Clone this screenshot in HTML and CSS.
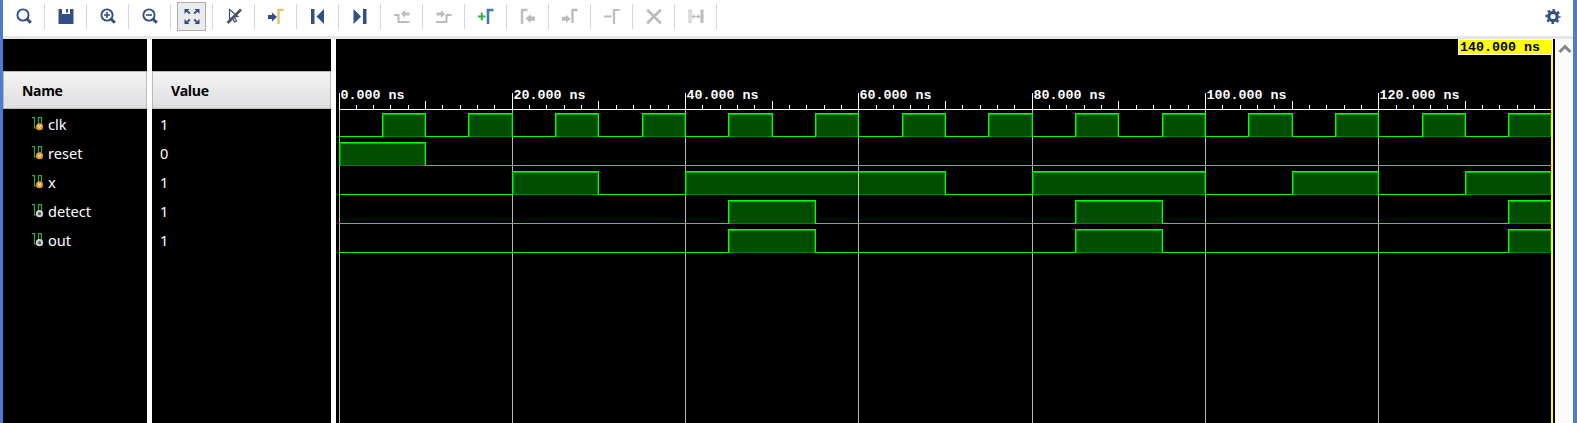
FILE: index.html
```html
<!DOCTYPE html>
<html lang="en">
<head>
<meta charset="utf-8">
<title>Waveform</title>
<link rel="stylesheet" href="styles.css">
</head>
<body>
<svg class="defs" width="0" height="0">
  <defs>
    <symbol id="lens" viewBox="0 0 16 16"><circle cx="7" cy="7" r="5.6" fill="none" stroke="currentColor" stroke-width="1.9"/><path d="M11 11l3.800 3.800" stroke="currentColor" stroke-width="3"/></symbol>
    <symbol id="sig" viewBox="0 0 12 14"><path d="M0 .6H2.500V11H5M6.500 8V.6H9.500V8" fill="none" stroke="#35a548" stroke-width="1.200"/></symbol>
  </defs>
</svg>
<div class="window">
  <div class="toolbar">
    <div class="tool"><svg viewBox="0 0 16 16"><use href="#lens"/></svg></div>
    <div class="tool"><svg viewBox="0 0 16 16"><path fill="currentColor" d="M.5 1H4v5h8V1h3.500v15H.5zM8 1h2v3.500H8z"/></svg></div>
    <div class="tool"><svg viewBox="0 0 16 16"><use href="#lens"/><path d="M4 7h6M7 4v6" stroke="currentColor" stroke-width="1.600"/></svg></div>
    <div class="tool"><svg viewBox="0 0 16 16"><use href="#lens"/><path d="M4 7h6" stroke="currentColor" stroke-width="1.600"/></svg></div>
    <div class="tool pressed"><svg viewBox="0 0 16 16"><path fill="currentColor" d="M.5 1h5L4 2.500l2.500 2.300-1.400 1.400L2.600 3.800.5 6zM15.500 1v5l-2.100-2.200L10.900 6.200 9.500 4.800 12 2.500 10.500 1zM.5 16v-5l2.100 2.200 2.500-2.400 1.400 1.400L4 14.500 5.500 16zM15.500 16h-5L12 14.500l-2.500-2.300 1.400-1.400 2.500 2.400 2.100-2.200z"/></svg></div>
    <div class="tool"><svg viewBox="0 0 16 16"><path d="M3.500 1.500v10.500l2.700-2.300 2.300 4.300 2-1-2.200-4 3.700-.4z" fill="none" stroke="currentColor" stroke-width="1.200"/><path d="M1.500 15L15 1.500" stroke="#555" stroke-width="2.600"/></svg></div>
    <div class="tool"><svg viewBox="0 0 16 16"><path fill="currentColor" d="M0 7h4V4.500L9 9l-5 4.500V11H0z"/><path d="M10.500 16V2H15.500" fill="none" stroke="#e5c563" stroke-width="2.400"/></svg></div>
    <div class="tool"><svg viewBox="0 0 16 16"><path fill="currentColor" d="M1 1h3.500v15H1zM14 1v15L6.500 8.500z"/></svg></div>
    <div class="tool"><svg viewBox="0 0 16 16"><path fill="currentColor" d="M11 1h3.500v15H11zM1.500 1v15L9 8.500z"/></svg></div>
    <div class="tool off"><svg viewBox="0 0 16 16"><path d="M0 7H4.500V14H15.500" fill="none" stroke="currentColor" stroke-width="2"/><path fill="currentColor" d="M7 6l4-4v2.500h4.500v3H11V10z"/></svg></div>
    <div class="tool off"><svg viewBox="0 0 16 16"><path d="M0 14H10.500V7H15.500" fill="none" stroke="currentColor" stroke-width="2"/><path fill="currentColor" d="M9 6L5 2v2.500H.5v3H5V10z"/></svg></div>
    <div class="tool"><svg viewBox="0 0 16 16"><path d="M0 8.500h7.500M3.800 4.700v7.600" stroke="#3cb043" stroke-width="2.200"/><path d="M10 16V2H15.500" fill="none" stroke="#3a7cb0" stroke-width="2.600"/></svg></div>
    <div class="tool off"><svg viewBox="0 0 16 16"><path d="M2 16V2H7.500" fill="none" stroke="currentColor" stroke-width="2.400"/><path fill="currentColor" d="M5.500 10.500L10.500 6v2.500H15v4.200h-4.500V15z"/></svg></div>
    <div class="tool off"><svg viewBox="0 0 16 16"><path fill="currentColor" d="M0 8.700h4V6.500L8.700 11 4 15v-2.200H0z"/><path d="M10.500 15V2H15.500" fill="none" stroke="currentColor" stroke-width="2.400"/></svg></div>
    <div class="tool off"><svg viewBox="0 0 16 16"><path d="M0 8.500h7.500M10 16V2H15.500" fill="none" stroke="currentColor" stroke-width="2.200"/></svg></div>
    <div class="tool off"><svg viewBox="0 0 16 16"><path d="M1.200 1.700l13.600 13.600M14.800 1.700l-13.600 13.600" stroke="currentColor" stroke-width="2.800"/></svg></div>
    <div class="tool off"><svg viewBox="0 0 16 16"><path d="M1 2h2v12.500H1z" fill="none" stroke="currentColor"/><path fill="currentColor" d="M12.500 1.500h3V15h-3zM3.500 8.500L6.500 6v2h3V6l3 2.500-3 2.500V9h-3v2z"/></svg></div>
    <div class="tool settings"><svg viewBox="0 0 16 16"><circle cx="8" cy="8.500" r="4.200" fill="none" stroke="currentColor" stroke-width="3.200"/><circle cx="8" cy="8.500" r="6.500" fill="none" stroke="currentColor" stroke-width="2.200" stroke-dasharray="2.553 2.553" stroke-dashoffset="1.276"/></svg></div>
  </div>
  <div class="main">
    <div class="column names">
      <div class="head">Name</div>
      <div class="row"><svg class="sig" viewBox="0 0 12 14"><use href="#sig"/><circle cx="7.500" cy="9.700" r="3.500" fill="#f39a2b"/><path d="M6.300 8.300l1.200 2.500 1.200-2.500" fill="none" stroke="#fff"/></svg>clk</div>
      <div class="row"><svg class="sig" viewBox="0 0 12 14"><use href="#sig"/><circle cx="7.500" cy="9.700" r="3.500" fill="#f39a2b"/><path d="M6.300 8.300l1.200 2.500 1.200-2.500" fill="none" stroke="#fff"/></svg>reset</div>
      <div class="row"><svg class="sig" viewBox="0 0 12 14"><use href="#sig"/><circle cx="7.500" cy="9.700" r="3.500" fill="#f39a2b"/><path d="M6.300 8.300l1.200 2.500 1.200-2.500" fill="none" stroke="#fff"/></svg>x</div>
      <div class="row"><svg class="sig" viewBox="0 0 12 14"><use href="#sig"/><circle cx="7.500" cy="9.700" r="2.600" fill="#555" stroke="#d0d0d0" stroke-width="2"/></svg>detect</div>
      <div class="row"><svg class="sig" viewBox="0 0 12 14"><use href="#sig"/><circle cx="7.500" cy="9.700" r="2.600" fill="#555" stroke="#d0d0d0" stroke-width="2"/></svg>out</div>
    </div>
    <div class="column values">
      <div class="head">Value</div>
      <div class="row">1</div>
      <div class="row">0</div>
      <div class="row">1</div>
      <div class="row">1</div>
      <div class="row">1</div>
    </div>
    <svg class="wave" id="wave" width="1219" height="384" viewBox="336 39 1219 384"></svg>
    <div class="scroll"><svg width="14" height="10" viewBox="0 0 14 10"><path d="M1.500 8L7 2.500 12.500 8" fill="none" stroke="#858585" stroke-width="3"/></svg></div>
  </div>
</div>
<script src="wave.js"></script>
</body>
</html>
```
FILE: styles.css
```css
body { margin: 0; background: #fff; }
.defs { position: absolute; }
.window {
  box-sizing: border-box;
  width: 1577px;
  height: 423px;
  overflow: hidden;
  border-left: 3px solid #4a7dcf;
  border-right: 4px solid #4a7dcf;
  font-family: "Noto Sans", "Open Sans", sans-serif;
}
.toolbar {
  box-sizing: border-box;
  display: flex;
  height: 39px;
  padding-top: 4px;
  border-bottom: 3px solid #e6e6e6;
  color: #324f85;
}
.tool {
  position: relative;
  display: flex;
  width: 42px;
  height: 25px;
  box-sizing: border-box;
  padding: 4px 0 0 12.5px;
  border-right: 1px solid #d6d6d6;
}
.tool svg { width: 16px; height: 16px; display: block; }
.off { color: #bcbcbc; }
.pressed::before {
  content: "";
  position: absolute;
  left: 6px;
  top: -2px;
  width: 27px;
  height: 27px;
  border: 1px solid #adadad;
  background: #ebebeb;
}
.pressed svg { position: relative; }
.settings { margin-left: auto; width: 29px; padding-left: 0.5px; border: 0; }
.main { display: flex; height: 384px; }
.column {
  box-sizing: border-box;
  background: #000;
  color: #fff;
  padding-top: 32px;
  margin-right: 5px;
  font-size: 14.6px;
}
.names { width: 144px; }
.values { width: 179px; }
.head {
  box-sizing: border-box;
  height: 38px;
  padding-left: 18px;
  border: 1px solid #b9b9bb;
  background: linear-gradient(#f4f4f4, #dedee1);
  color: #000;
  font: 700 14px/37px "Open Sans", "Noto Sans", sans-serif;
  letter-spacing: -0.35px;
}
.row {
  box-sizing: border-box;
  display: flex;
  align-items: center;
  height: 29px;
  padding: 1px 0 0 8px;
  line-height: 29px;
}
.names .row { padding-left: 29px; }
.sig { width: 12px; height: 14px; margin-right: 4px; }
.wave { display: block; background: #000; flex: none; }
.wave text { font: bold 13.333px "Liberation Mono", monospace; fill: #fff; }
.wave .marker { fill: #000; }
.scroll { flex: 1; background: #fafafa; padding: 5px 0 0 3px; }
.scroll svg { display: block; }
```
FILE: wave.js
```js
const svg = document.getElementById('wave');
const X0 = 339, SCALE = 8.664, END = 140;
const x = t => Math.floor(X0 + t * SCALE);

function add(name, attrs, text) {
  const el = document.createElementNS('http://www.w3.org/2000/svg', name);
  for (const key in attrs) el.setAttribute(key, attrs[key]);
  if (text) el.textContent = text;
  svg.appendChild(el);
}
function rect(left, top, width, height, fill) {
  add('rect', { x: left, y: top, width, height, fill });
}

const signals = [
  Array.from({ length: 14 }, (_, i) => [i * 10 + 5, i * 10 + 10]),
  [[0, 10]],
  [[20, 30], [40, 70], [80, 100], [110, 120], [130, 140]],
  [[45, 55], [85, 95], [135, 140]],
  [[45, 55], [85, 95], [135, 140]]
];

// High pulses are filled; the grid is laid over the fill and under the edges.
signals.forEach((pulses, i) => {
  const top = 113 + i * 29;
  rect(X0, top + 23, x(END) - X0, 1, '#00ff00');
  for (const [a, b] of pulses) {
    const left = x(a), w = x(b) - left;
    rect(left, top, w + 1, 24, '#008000');
    rect(left + 2, top + 2, w - 3, 21, '#004d00');
    rect(left + 1, top + 1, w - 1, 1, '#00b300');
    rect(left + 1, top + 1, 1, 22, '#009900');
  }
});
for (let t = 0; t < END; t += 20) rect(x(t), 110, 1, 313, 'rgba(255,255,255,.72)');
signals.forEach((pulses, i) => {
  const top = 113 + i * 29;
  rect(X0, top + 23, 1, 1, '#00ff00');
  for (const [a, b] of pulses) {
    rect(x(a), top, x(b) - x(a) + 1, 1, '#00ff00');
    rect(x(a), top, 1, 24, '#00ff00');
    rect(x(b), top, 1, 24, '#00ff00');
  }
});

// Time ruler.
rect(X0, 109, x(END) - X0, 1, '#fff');
for (let t = 0; t < END; t += 2) {
  const top = t % 20 === 0 ? 93 : t % 10 === 0 ? 101 : 105;
  rect(x(t), top, 1, 109 - top, '#fff');
}
for (let t = 0; t < END; t += 20) add('text', { x: x(t) + 1.500, y: 99 }, t + '.000 ns');

// Cursor.
rect(1551, 39, 2, 384, '#ffff00');
rect(1458, 39, 95, 16, '#fff');
rect(1459, 40, 93, 14, '#ffff00');
add('text', { x: 1460, y: 51, class: 'marker' }, '140.000 ns');
```
